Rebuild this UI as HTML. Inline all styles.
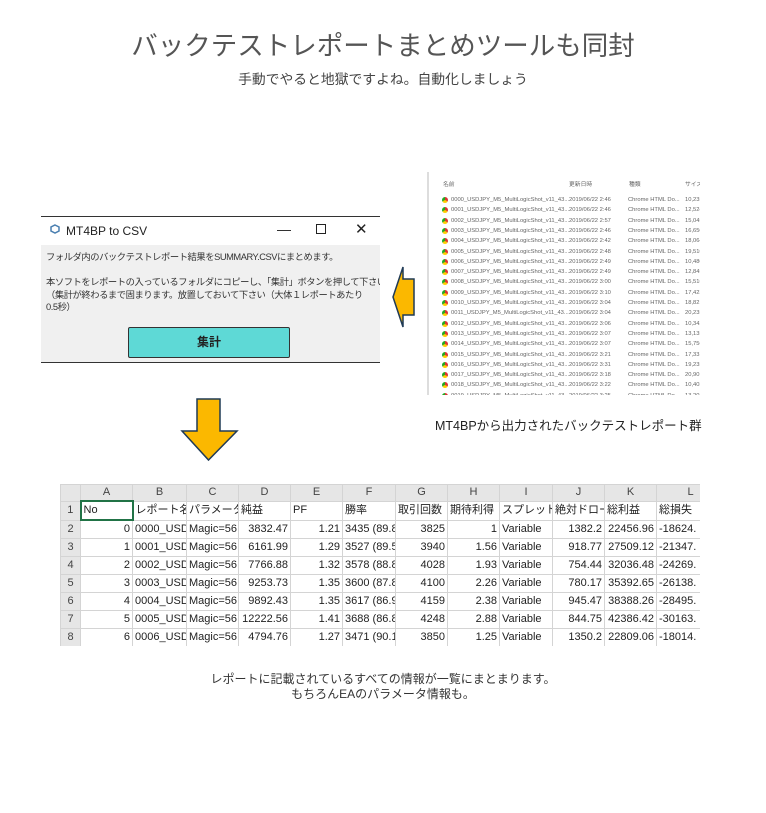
<!DOCTYPE html>
<html><head><meta charset="utf-8"><style>
*{margin:0;padding:0;box-sizing:border-box}
body{width:766px;height:813px;background:#fff;position:relative;overflow:hidden;font-family:"Liberation Sans","Noto Sans CJK JP",sans-serif;color:#333}
.abs{position:absolute}
.t1{left:0;width:766px;top:29px;text-align:center;font-size:26.5px;color:#555;line-height:34px}
.t2{left:0;width:766px;top:71px;text-align:center;font-size:13.8px;color:#444;line-height:18px}
.dlg{left:41px;top:216px;width:339px;height:147px;border-top:1px solid #333;border-bottom:1px solid #333;background:#f0f0f0;overflow:hidden}
.dlg .bar{height:28px;background:#fff;position:relative;font-size:12px;color:#222}
.dlg .body{font-size:9.3px;color:#333;line-height:12.5px;padding:6px 0 0 5px;white-space:nowrap;letter-spacing:-0.45px}
.btn{position:absolute;left:87px;top:110px;width:162px;height:31px;background:#5ed9d6;border:1px solid #333;border-radius:2px;text-align:center;line-height:29px;font-size:12px;font-weight:bold;color:#222}
.exp{left:427px;top:172px;width:273px;height:223px;background:#fff;border-left:2px solid #ddd;font-size:5.8px;color:#666;overflow:hidden}
.exp .r{position:absolute;left:0;height:10px;line-height:10px;white-space:nowrap;width:273px}
.exp .r span{position:absolute}
.ic{width:6px;height:6px;border-radius:50%;background:conic-gradient(#d33 0 120deg,#fc0 120deg 240deg,#2a2 240deg);top:2px;left:13px}
.cap{left:435px;top:415px;font-size:12.5px;color:#222}
.tw{position:absolute;left:60px;top:484px;width:640px;height:162px;overflow:hidden}
table{border-collapse:collapse;font-size:11px;color:#222;table-layout:fixed;width:664px}
td{border:1px solid #d4d4d4;height:18px;padding:0 2px;white-space:nowrap;overflow:hidden;line-height:17px}
tr.h td{background:#e6e6e6;text-align:center;color:#444;height:16px;line-height:15px}
td.n{background:#e6e6e6;text-align:center;color:#444}
.rt{text-align:right}
.cp{left:0;width:766px;top:672px;text-align:center;font-size:12px;color:#333;line-height:15px}
</style></head><body>
<div class="abs t1">バックテストレポートまとめツールも同封</div>
<div class="abs t2">手動でやると地獄ですよね。自動化しましょう</div>

<div class="abs dlg">
 <div class="bar">
  <svg class="abs" style="left:9px;top:7px" width="10" height="12"><path d="M5 1 L9 3 L9 7 L5 9 L1 7 L1 3Z" fill="none" stroke="#4a7fb0" stroke-width="1.5"/></svg>
  <span class="abs" style="left:25px;top:7px">MT4BP to CSV</span>
  <span class="abs" style="left:236px;top:4px;font-size:14px">—</span>
  <span class="abs" style="left:275px;top:7px;width:10px;height:10px;border:1px solid #222"></span>
  <span class="abs" style="left:314px;top:3px;font-size:15px">✕</span>
 </div>
 <div class="body">フォルダ内のバックテストレポート結果をSUMMARY.CSVにまとめます。<br><br>本ソフトをレポートの入っているフォルダにコピーし、「集計」ボタンを押して下さい。<br>（集計が終わるまで固まります。放置しておいて下さい（大体１レポートあたり<br>0.5秒）</div>
 <div class="btn">集計</div>
</div>

<svg class="abs" style="left:390px;top:265px" width="26" height="64"><path d="M24 14 H13 V2 L3 32 L13 62 V50 H24Z" fill="#fbb800" stroke="#1f3a55" stroke-width="1.5"/></svg>
<svg class="abs" style="left:180px;top:398px" width="60" height="64"><path d="M17 1 H40 V33 H57 L28.5 62 L2 33 H17Z" fill="#fbb800" stroke="#1f3a55" stroke-width="1.5"/></svg>

<div class="abs exp">
 <div class="r" style="top:8px"><span style="left:14px">名前</span><span style="left:140px">更新日時</span><span style="left:200px">種類</span><span style="left:256px">サイズ</span></div>
 <div class="r" style="top:23px"><span class="ic"></span><span style="left:22px">0000_USDJPY_M5_MultiLogicShot_v11_43...</span><span style="left:140px">2019/06/22 2:46</span><span style="left:199px">Chrome HTML Do...</span><span style="left:256px">10,235 KB</span></div>
 <div class="r" style="top:33.3px"><span class="ic"></span><span style="left:22px">0001_USDJPY_M5_MultiLogicShot_v11_43...</span><span style="left:140px">2019/06/22 2:46</span><span style="left:199px">Chrome HTML Do...</span><span style="left:256px">12,524 KB</span></div>
 <div class="r" style="top:43.6px"><span class="ic"></span><span style="left:22px">0002_USDJPY_M5_MultiLogicShot_v11_43...</span><span style="left:140px">2019/06/22 2:57</span><span style="left:199px">Chrome HTML Do...</span><span style="left:256px">15,045 KB</span></div>
 <div class="r" style="top:53.9px"><span class="ic"></span><span style="left:22px">0003_USDJPY_M5_MultiLogicShot_v11_43...</span><span style="left:140px">2019/06/22 2:46</span><span style="left:199px">Chrome HTML Do...</span><span style="left:256px">16,650 KB</span></div>
 <div class="r" style="top:64.2px"><span class="ic"></span><span style="left:22px">0004_USDJPY_M5_MultiLogicShot_v11_43...</span><span style="left:140px">2019/06/22 2:42</span><span style="left:199px">Chrome HTML Do...</span><span style="left:256px">18,064 KB</span></div>
 <div class="r" style="top:74.5px"><span class="ic"></span><span style="left:22px">0005_USDJPY_M5_MultiLogicShot_v11_43...</span><span style="left:140px">2019/06/22 2:48</span><span style="left:199px">Chrome HTML Do...</span><span style="left:256px">19,510 KB</span></div>
 <div class="r" style="top:84.8px"><span class="ic"></span><span style="left:22px">0006_USDJPY_M5_MultiLogicShot_v11_43...</span><span style="left:140px">2019/06/22 2:49</span><span style="left:199px">Chrome HTML Do...</span><span style="left:256px">10,480 KB</span></div>
 <div class="r" style="top:95.1px"><span class="ic"></span><span style="left:22px">0007_USDJPY_M5_MultiLogicShot_v11_43...</span><span style="left:140px">2019/06/22 2:49</span><span style="left:199px">Chrome HTML Do...</span><span style="left:256px">12,845 KB</span></div>
 <div class="r" style="top:105.4px"><span class="ic"></span><span style="left:22px">0008_USDJPY_M5_MultiLogicShot_v11_43...</span><span style="left:140px">2019/06/22 3:00</span><span style="left:199px">Chrome HTML Do...</span><span style="left:256px">15,516 KB</span></div>
 <div class="r" style="top:115.7px"><span class="ic"></span><span style="left:22px">0009_USDJPY_M5_MultiLogicShot_v11_43...</span><span style="left:140px">2019/06/22 3:10</span><span style="left:199px">Chrome HTML Do...</span><span style="left:256px">17,423 KB</span></div>
 <div class="r" style="top:126px"><span class="ic"></span><span style="left:22px">0010_USDJPY_M5_MultiLogicShot_v11_43...</span><span style="left:140px">2019/06/22 3:04</span><span style="left:199px">Chrome HTML Do...</span><span style="left:256px">18,821 KB</span></div>
 <div class="r" style="top:136.3px"><span class="ic"></span><span style="left:22px">0011_USDJPY_M5_MultiLogicShot_v11_43...</span><span style="left:140px">2019/06/22 3:04</span><span style="left:199px">Chrome HTML Do...</span><span style="left:256px">20,235 KB</span></div>
 <div class="r" style="top:146.6px"><span class="ic"></span><span style="left:22px">0012_USDJPY_M5_MultiLogicShot_v11_43...</span><span style="left:140px">2019/06/22 3:06</span><span style="left:199px">Chrome HTML Do...</span><span style="left:256px">10,342 KB</span></div>
 <div class="r" style="top:156.9px"><span class="ic"></span><span style="left:22px">0013_USDJPY_M5_MultiLogicShot_v11_43...</span><span style="left:140px">2019/06/22 3:07</span><span style="left:199px">Chrome HTML Do...</span><span style="left:256px">13,135 KB</span></div>
 <div class="r" style="top:167.2px"><span class="ic"></span><span style="left:22px">0014_USDJPY_M5_MultiLogicShot_v11_43...</span><span style="left:140px">2019/06/22 3:07</span><span style="left:199px">Chrome HTML Do...</span><span style="left:256px">15,756 KB</span></div>
 <div class="r" style="top:177.5px"><span class="ic"></span><span style="left:22px">0015_USDJPY_M5_MultiLogicShot_v11_43...</span><span style="left:140px">2019/06/22 3:21</span><span style="left:199px">Chrome HTML Do...</span><span style="left:256px">17,331 KB</span></div>
 <div class="r" style="top:187.8px"><span class="ic"></span><span style="left:22px">0016_USDJPY_M5_MultiLogicShot_v11_43...</span><span style="left:140px">2019/06/22 3:31</span><span style="left:199px">Chrome HTML Do...</span><span style="left:256px">19,235 KB</span></div>
 <div class="r" style="top:198.1px"><span class="ic"></span><span style="left:22px">0017_USDJPY_M5_MultiLogicShot_v11_43...</span><span style="left:140px">2019/06/22 3:18</span><span style="left:199px">Chrome HTML Do...</span><span style="left:256px">20,901 KB</span></div>
 <div class="r" style="top:208.4px"><span class="ic"></span><span style="left:22px">0018_USDJPY_M5_MultiLogicShot_v11_43...</span><span style="left:140px">2019/06/22 3:22</span><span style="left:199px">Chrome HTML Do...</span><span style="left:256px">10,403 KB</span></div>
 <div class="r" style="top:218.7px"><span class="ic"></span><span style="left:22px">0019_USDJPY_M5_MultiLogicShot_v11_43...</span><span style="left:140px">2019/06/22 3:25</span><span style="left:199px">Chrome HTML Do...</span><span style="left:256px">13,202 KB</span></div>
</div>
<div class="abs cap">MT4BPから出力されたバックテストレポート群</div>

<div class="tw">
<table>
<colgroup><col style="width:20px"><col style="width:52px"><col style="width:54px"><col style="width:52px"><col style="width:52px"><col style="width:52px"><col style="width:53px"><col style="width:52px"><col style="width:52px"><col style="width:53px"><col style="width:52px"><col style="width:52px"><col style="width:68px"></colgroup>
<tr class="h"><td></td><td>A</td><td>B</td><td>C</td><td>D</td><td>E</td><td>F</td><td>G</td><td>H</td><td>I</td><td>J</td><td>K</td><td>L</td></tr>
<tr><td class="n">1</td><td style="border:2px solid #217346">No</td><td>レポート名</td><td>パラメータ</td><td>純益</td><td>PF</td><td>勝率</td><td>取引回数</td><td>期待利得</td><td>スプレッド</td><td>絶対ドロー</td><td>総利益</td><td>総損失</td></tr>
<tr><td class="n">2</td><td class="rt">0</td><td>0000_USD</td><td>Magic=56</td><td class="rt">3832.47</td><td class="rt">1.21</td><td>3435 (89.8</td><td class="rt">3825</td><td class="rt">1</td><td>Variable</td><td class="rt">1382.2</td><td class="rt">22456.96</td><td>-18624.</td></tr>
<tr><td class="n">3</td><td class="rt">1</td><td>0001_USD</td><td>Magic=56</td><td class="rt">6161.99</td><td class="rt">1.29</td><td>3527 (89.5</td><td class="rt">3940</td><td class="rt">1.56</td><td>Variable</td><td class="rt">918.77</td><td class="rt">27509.12</td><td>-21347.</td></tr>
<tr><td class="n">4</td><td class="rt">2</td><td>0002_USD</td><td>Magic=56</td><td class="rt">7766.88</td><td class="rt">1.32</td><td>3578 (88.8</td><td class="rt">4028</td><td class="rt">1.93</td><td>Variable</td><td class="rt">754.44</td><td class="rt">32036.48</td><td>-24269.</td></tr>
<tr><td class="n">5</td><td class="rt">3</td><td>0003_USD</td><td>Magic=56</td><td class="rt">9253.73</td><td class="rt">1.35</td><td>3600 (87.8</td><td class="rt">4100</td><td class="rt">2.26</td><td>Variable</td><td class="rt">780.17</td><td class="rt">35392.65</td><td>-26138.</td></tr>
<tr><td class="n">6</td><td class="rt">4</td><td>0004_USD</td><td>Magic=56</td><td class="rt">9892.43</td><td class="rt">1.35</td><td>3617 (86.9</td><td class="rt">4159</td><td class="rt">2.38</td><td>Variable</td><td class="rt">945.47</td><td class="rt">38388.26</td><td>-28495.</td></tr>
<tr><td class="n">7</td><td class="rt">5</td><td>0005_USD</td><td>Magic=56</td><td class="rt">12222.56</td><td class="rt">1.41</td><td>3688 (86.8</td><td class="rt">4248</td><td class="rt">2.88</td><td>Variable</td><td class="rt">844.75</td><td class="rt">42386.42</td><td>-30163.</td></tr>
<tr><td class="n">8</td><td class="rt">6</td><td>0006_USD</td><td>Magic=56</td><td class="rt">4794.76</td><td class="rt">1.27</td><td>3471 (90.1</td><td class="rt">3850</td><td class="rt">1.25</td><td>Variable</td><td class="rt">1350.2</td><td class="rt">22809.06</td><td>-18014.</td></tr>
</table>
</div>

<div class="abs cp">レポートに記載されているすべての情報が一覧にまとまります。<br>もちろんEAのパラメータ情報も。</div>
</body></html>
